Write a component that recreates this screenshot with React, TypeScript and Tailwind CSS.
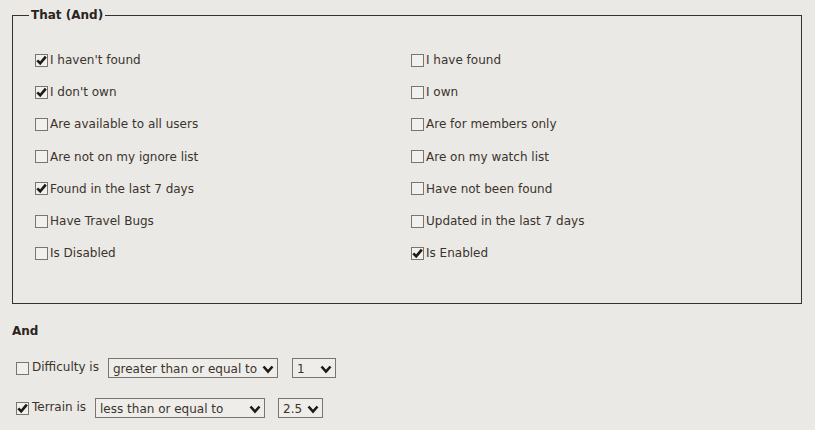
import React from 'react';

const filters: [string, boolean, string, boolean][] = [
  ["I haven't found", true, 'I have found', false],
  ["I don't own", true, 'I own', false],
  ['Are available to all users', false, 'Are for members only', false],
  ['Are not on my ignore list', false, 'Are on my watch list', false],
  ['Found in the last 7 days', true, 'Have not been found', false],
  ['Have Travel Bugs', false, 'Updated in the last 7 days', false],
  ['Is Disabled', false, 'Is Enabled', true],
];

const Box = ({ checked }: { checked: boolean }) => (
  <span className="w-[13px] h-[13px] border border-[#7a766f] bg-[#f2f0ed] flex items-center justify-center shrink-0">
    {checked && (
      <svg width="11" height="11" viewBox="0 0 11 11">
        <path d="M1.3 5.3 L4.2 8.4 L9.8 1.6" fill="none" stroke="#1c1a17" strokeWidth="2.6" />
      </svg>
    )}
  </span>
);

const Check = ({ label, checked }: { label: string; checked: boolean }) => (
  <div className="flex items-center gap-[2px] h-[32.2px]">
    <Box checked={checked} />
    <span className="leading-none">{label}</span>
  </div>
);

const Select = ({ value, width }: { value: string; width: string }) => (
  <div className={`${width} h-[20px] border border-[#7a766f] bg-[#efedea] flex items-center justify-between pl-[4px] pr-[3px] pt-[2px]`}>
    <span className="leading-none">{value}</span>
    <svg width="12" height="10" viewBox="0 0 12 10">
      <path d="M1.5 2.5 L6 7.5 L10.5 2.5" fill="none" stroke="#1c1a17" strokeWidth="2.6" />
    </svg>
  </div>
);

export default function App() {
  return (
    <div className="w-[815px] h-[430px] bg-[#ebe9e6] text-[#3a342c] text-[12px] font-['DejaVu_Sans',Verdana,sans-serif] overflow-hidden">
      <div className="pt-[6px] pl-[12px]">
        <fieldset className="w-[790px] h-[298px] border border-[#3a3128] pl-[22px] pt-[20px]">
          <legend className="-ml-[6px] px-[2px] font-bold text-[#2a241c]">That (And)</legend>
          <div className="grid grid-cols-[376px_1fr]">
            {filters.map(([l, lc, r, rc]) => (
              <React.Fragment key={l}>
                <Check label={l} checked={lc} />
                <Check label={r} checked={rc} />
              </React.Fragment>
            ))}
          </div>
        </fieldset>
      </div>

      <div className="pl-[12px] pt-[21px] font-bold text-[#2a241c] leading-none">And</div>

      <div className="pl-[16px] pt-[21px] flex flex-col gap-[20px]">
        <div className="flex items-center">
          <Box checked={false} />
          <span className="ml-[3px] mr-[9px] -mt-[3px] leading-none">Difficulty is</span>
          <Select value="greater than or equal to" width="w-[170px]" />
          <div className="w-[14px]" />
          <Select value="1" width="w-[44px]" />
        </div>
        <div className="flex items-center">
          <Box checked={true} />
          <span className="ml-[3px] mr-[9px] -mt-[3px] leading-none">Terrain is</span>
          <Select value="less than or equal to" width="w-[170px]" />
          <div className="w-[13px]" />
          <Select value="2.5" width="w-[45px]" />
        </div>
      </div>
    </div>
  );
}
